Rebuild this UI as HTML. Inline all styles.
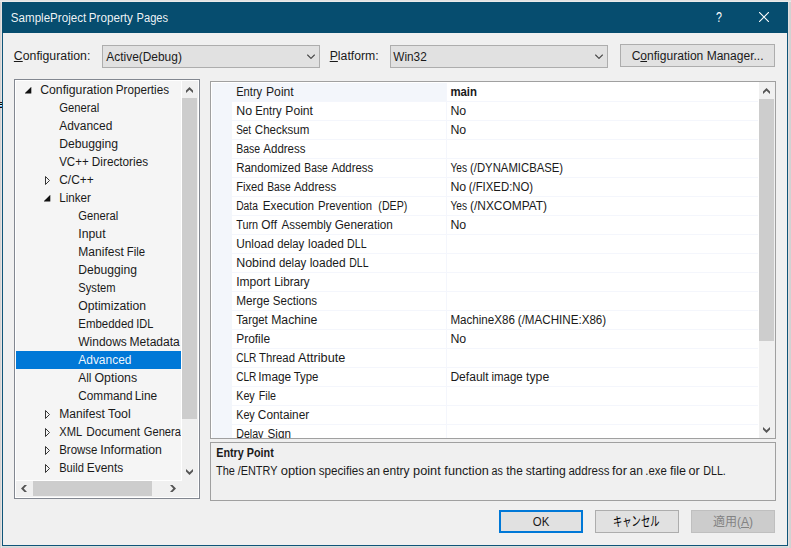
<!DOCTYPE html>
<html lang="ja">
<head>
<meta charset="utf-8">
<title>SampleProject Property Pages</title>
<style>
html,body{margin:0;padding:0}
body{width:791px;height:548px;overflow:hidden;background:#e1e1e1;position:relative;font-family:"Liberation Sans","Noto Sans CJK JP",sans-serif;font-size:12px;color:#1a1a1a;line-height:18px}
div,svg,.t{position:absolute}
.t{white-space:nowrap;transform-origin:0 0}
.w{color:rgba(255,255,255,.94)}
.b{font-weight:bold}
.g{color:#838383}
.sh{left:0;top:0;width:791px;height:548px;background:linear-gradient(#e2e2e2 0 1px,#ebebeb 1px 2px,transparent 2px) 0 0/100% 100% no-repeat,linear-gradient(90deg,#d4d2d2 0 1px,#e6e4e4 1px 2px,transparent 2px 788px,#e2e0e0 788px 789px,#d6d4d4 789px 790px,#d2d2d2 790px),linear-gradient(#e0e0e0 0 546px,#dedcdc 546px 547px,#d6d6d6 547px)}
.frame{left:2px;top:2px;width:784px;height:542px;border:1px solid #0f5579;background:#f0f0f0}
.title{left:2px;top:2px;width:786px;height:31px;background:#064d6f}
.combo{top:45px;width:216px;height:21px;border:1px solid #adadad;background:#e1e1e1}
.btn{height:21px;border:1px solid #adadad;background:#e1e1e1}
.btn.def{border:2px solid #0078d7;height:19px}
.btn.dis{background:#cccccc;border-color:#bfbfbf}
.treebox{left:14px;top:79px;width:184px;height:418px;border:1px solid #828790;background:#fff}
.treebg{left:16px;top:81px;width:165px;height:399px;background:#f5f5f5}
.tree{left:16px;top:81px;width:165px;height:399px;overflow:hidden}
.sel{left:0;width:165px;height:18px;background:#0078d7}
.sb{background:#f0f0f0}
.thumb{background:#cdcdcd}
.ar{fill:#555}
.gridbox{left:210px;top:81px;width:564px;height:356px;border:1px solid #a0a0a0;background:#fff}
.gmargin{left:212px;top:83px;width:20px;height:355px;background:#f3f6fb}
.gsel{left:232px;top:83px;width:214px;height:19px;background:#f3f6fb}
.gl{left:232px;width:526px;height:1px;background:#f4f6fc}
.gcol{left:446px;top:83px;width:1px;height:355px;background:#f4f6fc}
.grid{left:232px;top:83px;width:526px;height:355px;overflow:hidden}
.desc{left:210px;top:442px;width:564px;height:57px;border:1px solid #a0a0a0;background:#f0f0f0}
.jp1{font-size:13.2px;transform:scaleX(0.705);color:#000}
.bk{left:0;top:102px;width:2px;height:6px;background:linear-gradient(#2a0a0a 0 1px,#b0e0e0 1px 2px,#000 2px 3px,#e8f0f8 3px 4px,#50a8f0 4px 5px,#200808 5px)}
</style>
</head>
<body>
<div class="sh"></div>
<div class="bk"></div>
<div class="frame"></div>
<div class="title"></div>
<span class="t w" style="left:10px;top:9px;transform:translateX(0.8px) scaleX(0.9657)">SampleProject</span> <span class="t w" style="left:88px;top:9px;transform:translateX(0.78px) scaleX(0.9721)">Property</span> <span class="t w" style="left:136px;top:9px;transform:translateX(0.55px) scaleX(0.9272)">Pages</span>
<svg style="left:715px;top:10px" width="10" height="14" viewBox="0 0 10 14"><text x="0" y="12.2" font-size="14.4" fill="#fff" font-family="Liberation Sans, sans-serif" transform="translate(0.9,0) scale(0.74,1)">?</text></svg>
<svg style="left:759px;top:12px" width="10" height="10" viewBox="0 0 10 10"><path d="M0 0 L10 10 M10 0 L0 10" stroke="#fff" stroke-width="1.1" fill="none"/></svg>
<span class="t" style="left:13px;top:47px;transform:translateX(0.85px) scaleX(1.0238)"><u>C</u>onfiguration:</span>
<div class="combo" style="left:102px"></div><span class="t" style="left:106px;top:48px;transform:translateX(0.36px) scaleX(0.9928)">Active(Debug)</span><svg style="left:307px;top:54px" width="8" height="5" viewBox="0 0 8 5"><path d="M0.3 0.7 L4 4.4 L7.7 0.7" stroke="#444" stroke-width="1.1" fill="none"/></svg>
<span class="t" style="left:329px;top:47px;transform:translateX(0.7px) scaleX(1.0194)"><u>P</u>latform:</span>
<div class="combo" style="left:390px"></div><span class="t" style="left:393px;top:48px;transform:translateX(0.28px) scaleX(0.983)">Win32</span><svg style="left:595px;top:54px" width="8" height="5" viewBox="0 0 8 5"><path d="M0.3 0.7 L4 4.4 L7.7 0.7" stroke="#444" stroke-width="1.1" fill="none"/></svg>
<div class="btn" style="left:620px;top:44px;width:153px"></div><span class="t" style="left:631px;top:47px;transform:translateX(0.65px) scaleX(1.0035)">C<u>o</u>nfiguration Manager...</span>
<div class="treebox"></div>
<div class="treebg"></div>
<div class="sb" style="left:182px;top:81px;width:16px;height:416px"></div>
<div class="sb" style="left:16px;top:481px;width:166px;height:16px"></div>
<div class="thumb" style="left:182px;top:98px;width:15px;height:321px"></div>
<div class="thumb" style="left:33px;top:481px;width:119px;height:15px"></div>
<svg class="ar" style="left:186px;top:87px" width="7" height="6" viewBox="0 0 7 6"><path d="M3.5 0 L7 3.5 L7 6 L3.5 2.7 L0 6 L0 3.5 Z"/></svg><svg class="ar" style="left:186px;top:469px" width="7" height="6" viewBox="0 0 7 6"><path d="M3.5 6 L7 2.5 L7 0 L3.5 3.3 L0 0 L0 2.5 Z"/></svg><svg class="ar" style="left:21px;top:485px" width="6" height="7" viewBox="0 0 6 7"><path d="M0 3.5 L3.5 0 L6 0 L2.7 3.5 L6 7 L3.5 7 Z"/></svg><svg class="ar" style="left:170px;top:485px" width="6" height="7" viewBox="0 0 6 7"><path d="M6 3.5 L2.5 0 L0 0 L3.3 3.5 L0 7 L2.5 7 Z"/></svg>
<div class="tree">
<svg style="left:9px;top:6px" width="7" height="7" viewBox="0 0 7 7"><path d="M6.3 -0.2 L6.3 6.4 L-0.4 6.4 Z" fill="#111"/></svg><span class="t" style="left:24px;top:0px;transform:translateX(0.2px) scaleX(1.0212)">Configuration</span> <span class="t" style="left:99px;top:0px;transform:translateX(0.81px) scaleX(0.973)">Properties</span>
<span class="t" style="left:43px;top:18px;transform:translateX(0.2px) scaleX(0.9376)">General</span>
<span class="t" style="left:43px;top:36px;transform:translateX(0.2px) scaleX(0.9942)">Advanced</span>
<span class="t" style="left:43px;top:54px;transform:translateX(0.2px) scaleX(1.0134)">Debugging</span>
<span class="t" style="left:43px;top:72px;transform:translateX(0.2px) scaleX(0.9579)">VC++</span> <span class="t" style="left:75px;top:72px;transform:translateX(0.87px) scaleX(0.9801)">Directories</span>
<svg style="left:28px;top:94px" width="7" height="11" viewBox="0 0 7 11"><path d="M1.5 1.5 L5.5 5.5 L1.5 9.5 Z" fill="none" stroke="#2b2b2b" stroke-width="0.95" stroke-linejoin="bevel"/></svg><span class="t" style="left:43px;top:90px;transform:translateX(0.2px) scaleX(0.9951)">C/C++</span>
<svg style="left:28px;top:114px" width="7" height="7" viewBox="0 0 7 7"><path d="M6.3 -0.2 L6.3 6.4 L-0.4 6.4 Z" fill="#111"/></svg><span class="t" style="left:43px;top:108px;transform:translateX(0.2px) scaleX(0.9687)">Linker</span>
<span class="t" style="left:62px;top:126px;transform:translateX(0.3px) scaleX(0.933)">General</span>
<span class="t" style="left:62px;top:144px;transform:translateX(0.3px) scaleX(1.0226)">Input</span>
<span class="t" style="left:62px;top:162px;transform:translateX(0.3px) scaleX(1.0031)">Manifest</span> <span class="t" style="left:110px;top:162px;transform:translateX(0.76px) scaleX(0.9458)">File</span>
<span class="t" style="left:62px;top:180px;transform:translateX(0.3px) scaleX(1.0089)">Debugging</span>
<span class="t" style="left:62px;top:198px;transform:translateX(0.3px) scaleX(0.9298)">System</span>
<span class="t" style="left:62px;top:216px;transform:translateX(0.3px) scaleX(1.0141)">Optimization</span>
<span class="t" style="left:62px;top:234px;transform:translateX(0.3px) scaleX(0.9545)">Embedded</span> <span class="t" style="left:120px;top:234px;transform:translateX(0.27px) scaleX(0.9182)">IDL</span>
<span class="t" style="left:62px;top:252px;transform:translateX(0.3px) scaleX(0.9968)">Windows</span> <span class="t" style="left:113px;top:252px;transform:translateX(0.57px) scaleX(1.0045)">Metadata</span>
<div class="sel" style="top:270px"></div><span class="t w" style="left:62px;top:270px;transform:translateX(0.3px) scaleX(0.995)">Advanced</span>
<span class="t" style="left:62px;top:288px;transform:translateX(0.3px) scaleX(0.9906)">All</span> <span class="t" style="left:78px;top:288px;transform:translateX(0.43px) scaleX(1.0315)">Options</span>
<span class="t" style="left:62px;top:306px;transform:translateX(0.3px) scaleX(0.9801)">Command</span> <span class="t" style="left:118px;top:306px;transform:translateX(0.72px) scaleX(0.9902)">Line</span>
<svg style="left:28px;top:328px" width="7" height="11" viewBox="0 0 7 11"><path d="M1.5 1.5 L5.5 5.5 L1.5 9.5 Z" fill="none" stroke="#2b2b2b" stroke-width="0.95" stroke-linejoin="bevel"/></svg><span class="t" style="left:43px;top:324px;transform:translateX(0.2px) scaleX(1.0058)">Manifest</span> <span class="t" style="left:91px;top:324px;transform:translateX(0.99px) scaleX(1.0319)">Tool</span>
<svg style="left:28px;top:346px" width="7" height="11" viewBox="0 0 7 11"><path d="M1.5 1.5 L5.5 5.5 L1.5 9.5 Z" fill="none" stroke="#2b2b2b" stroke-width="0.95" stroke-linejoin="bevel"/></svg><span class="t" style="left:43px;top:342px;transform:translateX(0.2px) scaleX(0.9299)">XML</span> <span class="t" style="left:70px;top:342px;transform:translateX(0.23px) scaleX(0.9858)">Document</span> <span class="t" style="left:127px;top:342px;transform:translateX(0.84px) scaleX(0.9273)">Generator</span>
<svg style="left:28px;top:364px" width="7" height="11" viewBox="0 0 7 11"><path d="M1.5 1.5 L5.5 5.5 L1.5 9.5 Z" fill="none" stroke="#2b2b2b" stroke-width="0.95" stroke-linejoin="bevel"/></svg><span class="t" style="left:43px;top:360px;transform:translateX(0.2px) scaleX(0.9572)">Browse</span> <span class="t" style="left:84px;top:360px;transform:translateX(0.23px) scaleX(1.0263)">Information</span>
<svg style="left:28px;top:382px" width="7" height="11" viewBox="0 0 7 11"><path d="M1.5 1.5 L5.5 5.5 L1.5 9.5 Z" fill="none" stroke="#2b2b2b" stroke-width="0.95" stroke-linejoin="bevel"/></svg><span class="t" style="left:43px;top:378px;transform:translateX(0.2px) scaleX(0.9236)">Build</span> <span class="t" style="left:70px;top:378px;transform:translateX(0.71px) scaleX(0.9948)">Events</span>
</div>
<div class="gridbox"></div>
<div class="gmargin"></div>
<div class="gsel"></div>
<div class="gl" style="top:101px"></div><div class="gl" style="top:120px"></div><div class="gl" style="top:139px"></div><div class="gl" style="top:158px"></div><div class="gl" style="top:177px"></div><div class="gl" style="top:196px"></div><div class="gl" style="top:215px"></div><div class="gl" style="top:234px"></div><div class="gl" style="top:253px"></div><div class="gl" style="top:272px"></div><div class="gl" style="top:291px"></div><div class="gl" style="top:310px"></div><div class="gl" style="top:329px"></div><div class="gl" style="top:348px"></div><div class="gl" style="top:367px"></div><div class="gl" style="top:386px"></div><div class="gl" style="top:405px"></div><div class="gl" style="top:424px"></div>
<div class="gcol"></div>
<div class="sb" style="left:759px;top:82px;width:16px;height:356px"></div>
<div class="thumb" style="left:759px;top:99px;width:15px;height:242px"></div>
<svg class="ar" style="left:763px;top:88px" width="7" height="6" viewBox="0 0 7 6"><path d="M3.5 0 L7 3.5 L7 6 L3.5 2.7 L0 6 L0 3.5 Z"/></svg><svg class="ar" style="left:763px;top:427px" width="7" height="6" viewBox="0 0 7 6"><path d="M3.5 6 L7 2.5 L7 0 L3.5 3.3 L0 0 L0 2.5 Z"/></svg>
<div class="grid">
<span class="t" style="left:4px;top:0px;transform:translateX(0.2px) scaleX(0.9276)">Entry</span> <span class="t" style="left:33px;top:0px;transform:translateX(0.97px) scaleX(1.0158)">Point</span> <span class="t b" style="left:218px;top:0px;transform:translateX(0.4px) scaleX(0.9497)">main</span>
<span class="t" style="left:4px;top:19px;transform:translateX(0.2px) scaleX(1.0327)">No</span> <span class="t" style="left:23px;top:19px;transform:translateX(0.3px) scaleX(0.9391)">Entry</span> <span class="t" style="left:53px;top:19px;transform:translateX(0.34px) scaleX(1.0104)">Point</span> <span class="t" style="left:218px;top:19px;transform:translateX(0.4px) scaleX(1.0294)">No</span>
<span class="t" style="left:4px;top:38px;transform:translateX(0.2px) scaleX(0.829)">Set</span> <span class="t" style="left:22px;top:38px;transform:translateX(0.81px) scaleX(0.9619)">Checksum</span> <span class="t" style="left:218px;top:38px;transform:translateX(0.4px) scaleX(1.0294)">No</span>
<span class="t" style="left:4px;top:57px;transform:translateX(0.2px) scaleX(0.8737)">Base</span> <span class="t" style="left:31px;top:57px;transform:translateX(0.32px) scaleX(0.9583)">Address</span>
<span class="t" style="left:4px;top:76px;transform:translateX(0.2px) scaleX(0.9553)">Randomized</span> <span class="t" style="left:72px;top:76px;transform:translateX(0.32px) scaleX(0.8566)">Base</span> <span class="t" style="left:99px;top:76px;transform:translateX(0.38px) scaleX(0.9492)">Address</span> <span class="t" style="left:218px;top:76px;transform:translateX(0.4px) scaleX(0.8471)">Yes</span> <span class="t" style="left:238px;top:76px;transform:translateX(0.03px) scaleX(0.9436)">(/DYNAMICBASE)</span>
<span class="t" style="left:4px;top:95px;transform:translateX(0.2px) scaleX(0.9293)">Fixed</span> <span class="t" style="left:35px;top:95px;transform:translateX(0.22px) scaleX(0.8596)">Base</span> <span class="t" style="left:61px;top:95px;transform:translateX(0.95px) scaleX(0.9589)">Address</span> <span class="t" style="left:218px;top:95px;transform:translateX(0.4px) scaleX(1.0294)">No</span> <span class="t" style="left:236px;top:95px;transform:translateX(0.74px) scaleX(0.9469)">(/FIXED:NO)</span>
<span class="t" style="left:4px;top:114px;transform:translateX(0.2px) scaleX(0.8543)">Data</span> <span class="t" style="left:30px;top:114px;transform:translateX(0.77px) scaleX(0.9725)">Execution</span> <span class="t" style="left:85px;top:114px;transform:translateX(0.99px) scaleX(0.9415)">Prevention</span> <span class="t" style="left:146px;top:114px;transform:translateX(0.36px) scaleX(0.8856)">(DEP)</span> <span class="t" style="left:218px;top:114px;transform:translateX(0.4px) scaleX(0.8471)">Yes</span> <span class="t" style="left:238px;top:114px;transform:translateX(0px) scaleX(0.9934)">(/NXCOMPAT)</span>
<span class="t" style="left:4px;top:133px;transform:translateX(0.2px) scaleX(0.9038)">Turn</span> <span class="t" style="left:29px;top:133px;transform:translateX(0.32px) scaleX(0.9907)">Off</span> <span class="t" style="left:49px;top:133px;transform:translateX(0.46px) scaleX(0.9641)">Assembly</span> <span class="t" style="left:102px;top:133px;transform:translateX(0.74px) scaleX(0.9785)">Generation</span> <span class="t" style="left:218px;top:133px;transform:translateX(0.4px) scaleX(1.0294)">No</span>
<span class="t" style="left:4px;top:152px;transform:translateX(0.2px) scaleX(0.987)">Unload</span> <span class="t" style="left:45px;top:152px;transform:translateX(0.16px) scaleX(0.9456)">delay</span> <span class="t" style="left:76px;top:152px;transform:translateX(0.06px) scaleX(0.9945)">loaded</span> <span class="t" style="left:115px;top:152px;transform:translateX(0.12px) scaleX(0.8842)">DLL</span>
<span class="t" style="left:4px;top:171px;transform:translateX(0.2px) scaleX(1.0345)">Nobind</span> <span class="t" style="left:46px;top:171px;transform:translateX(0.91px) scaleX(0.9526)">delay</span> <span class="t" style="left:77px;top:171px;transform:translateX(0.69px) scaleX(0.997)">loaded</span> <span class="t" style="left:117px;top:171px;transform:translateX(0.22px) scaleX(0.874)">DLL</span>
<span class="t" style="left:4px;top:190px;transform:translateX(0.2px) scaleX(1.007)">Import</span> <span class="t" style="left:42px;top:190px;transform:translateX(0.15px) scaleX(0.9674)">Library</span>
<span class="t" style="left:4px;top:209px;transform:translateX(0.2px) scaleX(0.9825)">Merge</span> <span class="t" style="left:40px;top:209px;transform:translateX(0.84px) scaleX(0.962)">Sections</span>
<span class="t" style="left:4px;top:228px;transform:translateX(0.2px) scaleX(0.9442)">Target</span> <span class="t" style="left:39px;top:228px;transform:translateX(0.18px) scaleX(1.0193)">Machine</span> <span class="t" style="left:218px;top:228px;transform:translateX(0.4px) scaleX(0.9673)">MachineX86</span> <span class="t" style="left:285px;top:228px;transform:translateX(0.78px) scaleX(0.9675)">(/MACHINE:X86)</span>
<span class="t" style="left:4px;top:247px;transform:translateX(0.2px) scaleX(0.9962)">Profile</span> <span class="t" style="left:218px;top:247px;transform:translateX(0.4px) scaleX(1.0294)">No</span>
<span class="t" style="left:4px;top:266px;transform:translateX(0.2px) scaleX(0.8403)">CLR</span> <span class="t" style="left:26px;top:266px;transform:translateX(0.97px) scaleX(0.9462)">Thread</span> <span class="t" style="left:66px;top:266px;transform:translateX(0.04px) scaleX(1.058)">Attribute</span>
<span class="t" style="left:4px;top:285px;transform:translateX(0.2px) scaleX(0.8413)">CLR</span> <span class="t" style="left:26px;top:285px;transform:translateX(0.26px) scaleX(0.9861)">Image</span> <span class="t" style="left:61px;top:285px;transform:translateX(0.72px) scaleX(0.9488)">Type</span> <span class="t" style="left:218px;top:285px;transform:translateX(0.4px) scaleX(1.006)">Default</span> <span class="t" style="left:259px;top:285px;transform:translateX(0.45px) scaleX(0.9555)">image</span> <span class="t" style="left:294px;top:285px;transform:translateX(0.03px) scaleX(1.0229)">type</span>
<span class="t" style="left:4px;top:304px;transform:translateX(0.2px) scaleX(0.8969)">Key</span> <span class="t" style="left:26px;top:304px;transform:translateX(0.79px) scaleX(0.8934)">File</span>
<span class="t" style="left:4px;top:323px;transform:translateX(0.2px) scaleX(0.8969)">Key</span> <span class="t" style="left:25px;top:323px;transform:translateX(0.86px) scaleX(0.9871)">Container</span>
<span class="t" style="left:4px;top:342px;transform:translateX(0.2px) scaleX(0.8873)">Delay</span> <span class="t" style="left:35px;top:342px;transform:translateX(0.55px) scaleX(0.974)">Sign</span>
</div>
<div class="desc"></div>
<span class="t b" style="left:216px;top:444px;transform:translateX(0.2px) scaleX(0.8987)">Entry Point</span>
<span class="t" style="left:216px;top:462px;transform:translateX(0.08px) scaleX(0.9117)">The</span> <span class="t" style="left:237px;top:462px;transform:translateX(0.69px) scaleX(0.9068)">/ENTRY</span> <span class="t" style="left:280px;top:462px;transform:translateX(0.7px) scaleX(1.0778)">option</span> <span class="t" style="left:318px;top:462px;transform:translateX(0.66px) scaleX(0.9719)">specifies</span> <span class="t" style="left:366px;top:462px;transform:translateX(0.44px) scaleX(1.0058)">an</span> <span class="t" style="left:382px;top:462px;transform:translateX(0.82px) scaleX(0.9999)">entry</span> <span class="t" style="left:413px;top:462px;transform:translateX(0.05px) scaleX(1.0635)">point</span> <span class="t" style="left:444px;top:462px;transform:translateX(0.37px) scaleX(1.0555)">function</span> <span class="t" style="left:491px;top:462px;transform:translateX(0.62px) scaleX(0.8965)">as</span> <span class="t" style="left:506px;top:462px;transform:translateX(0.29px) scaleX(0.9845)">the</span> <span class="t" style="left:525px;top:462px;transform:translateX(0.77px) scaleX(1.0139)">starting</span> <span class="t" style="left:568px;top:462px;transform:translateX(0.46px) scaleX(0.9589)">address</span> <span class="t" style="left:612px;top:462px;transform:translateX(0.06px) scaleX(1.0634)">for</span> <span class="t" style="left:629px;top:462px;transform:translateX(0.44px) scaleX(1.0058)">an</span> <span class="t" style="left:645px;top:462px;transform:translateX(0.28px) scaleX(0.9479)">.exe</span> <span class="t" style="left:669px;top:462px;transform:translateX(0.96px) scaleX(1.0469)">file</span> <span class="t" style="left:688px;top:462px;transform:translateX(0.4px) scaleX(1.0524)">or</span> <span class="t" style="left:703px;top:462px;transform:translateX(0.19px) scaleX(0.8932)">DLL.</span>
<div class="btn def" style="left:499px;top:510px;width:80px"></div><span class="t" style="left:532px;top:513px;transform:translateX(0.8px) scaleX(0.9514)">OK</span>
<div class="btn" style="left:595px;top:510px;width:82px"></div><span class="t jp1" style="left:613.1px;top:512.8px">キャンセル</span>
<div class="btn dis" style="left:691px;top:510px;width:82px"></div><span class="t g" style="left:713px;top:513px">適用(<u>A</u>)</span>
</body>
</html>
